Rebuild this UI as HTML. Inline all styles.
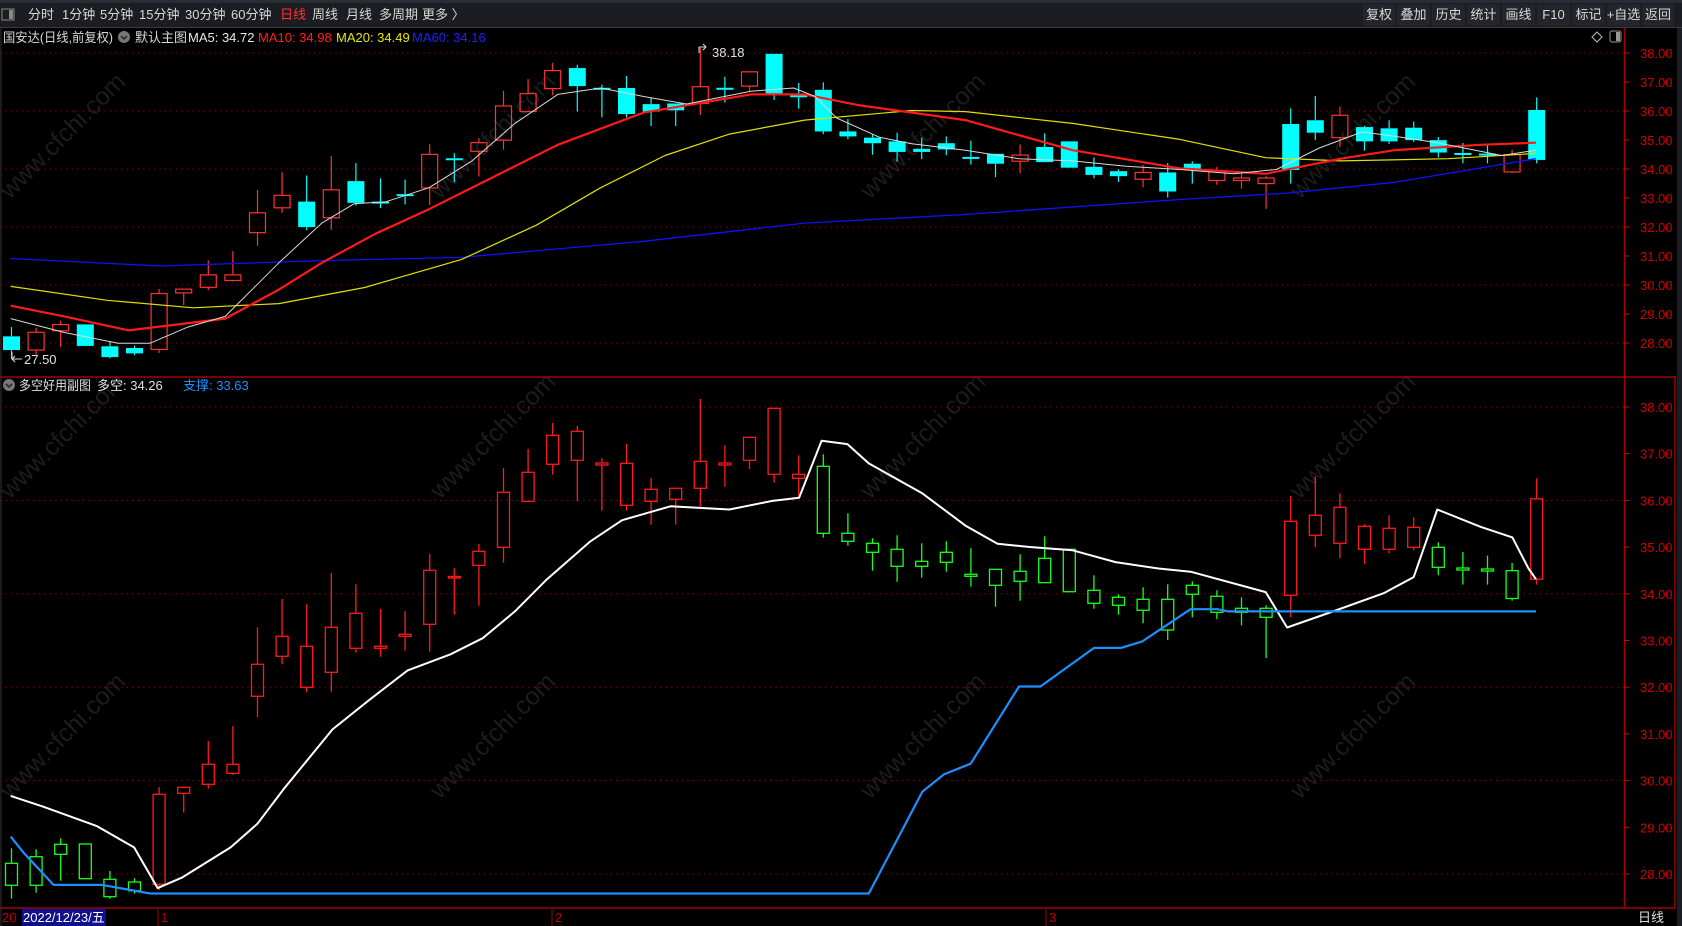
<!DOCTYPE html>
<html><head><meta charset="utf-8">
<style>
html,body{margin:0;padding:0;background:#000;width:1682px;height:926px;overflow:hidden;font-family:"Liberation Sans","Noto Sans CJK SC",sans-serif;}
svg{display:block;overflow:hidden;position:absolute;left:0;top:0}
</style></head>
<body>
<svg id="s" width="1682" height="926" viewBox="0 0 1682 926" xmlns="http://www.w3.org/2000/svg" font-family="Liberation Sans, Noto Sans CJK SC, sans-serif">
<rect x="0" y="0" width="1682" height="926" fill="#000"/>
<g id="wm" font-size="25" fill="#1c1c1c"></g>
<rect x="0" y="0" width="1682" height="27" fill="#1c1d22"/>
<rect x="0" y="0" width="1682" height="3" fill="#2a2c33"/>
<line x1="0" y1="27.5" x2="1682" y2="27.5" stroke="#3a3b40"/>
<g font-size="13" fill="#d8d8d8">
<rect x="2" y="9" width="12" height="11" fill="none" stroke="#888" stroke-width="1"/><rect x="9" y="10" width="4" height="9" fill="#888"/>
<text x="28" y="19">分时</text><text x="62" y="19">1分钟</text><text x="100" y="19">5分钟</text><text x="139" y="19">15分钟</text><text x="185" y="19">30分钟</text><text x="231" y="19">60分钟</text>
<text x="280" y="19" fill="#ff3030">日线</text><text x="312" y="19">周线</text><text x="346" y="19">月线</text><text x="379" y="19">多周期</text><text x="422" y="19">更多 〉</text>
</g>
<g id="btns" font-size="13" fill="#d8d8d8"></g>
<g font-size="13">
<text x="3" y="42" fill="#d8d8d8" textLength="110" lengthAdjust="spacingAndGlyphs">国安达(日线,前复权)</text>
<circle cx="124" cy="37" r="6" fill="#777"/><path d="M121 36 L124 39 L127 36" stroke="#222" stroke-width="1.5" fill="none"/>
<text x="135" y="42" fill="#d8d8d8">默认主图</text>
<text x="188" y="42" fill="#e8e8e8">MA5: 34.72</text>
<text x="258" y="42" fill="#ff2020">MA10: 34.98</text>
<text x="336" y="42" fill="#e8e800">MA20: 34.49</text>
<text x="412" y="42" fill="#2020ff">MA60: 34.16</text>
</g>
<path d="M1597 32 L1602 37 L1597 42 L1592 37 Z" fill="none" stroke="#bbb"/>
<rect x="1610" y="31" width="11" height="11" rx="2" fill="none" stroke="#999"/><rect x="1616" y="32" width="4" height="9" fill="#999"/>
<g id="grid"></g>
<g id="chart"></g>
<line x1="1624.5" y1="28" x2="1624.5" y2="908" stroke="#a00000" stroke-width="1.5"/>
<line x1="0" y1="377" x2="1676" y2="377" stroke="#a00000" stroke-width="1.5"/>
<line x1="0" y1="908" x2="1676" y2="908" stroke="#a00000" stroke-width="1.5"/>
<line x1="1675" y1="377" x2="1675" y2="908" stroke="#a00000" stroke-width="1.5"/>
<rect x="1677" y="28" width="5" height="898" fill="#1c1d22"/>
<line x1="1" y1="28" x2="1" y2="926" stroke="#333"/>
<g id="axis" font-size="13" fill="#d00000"></g>
<g font-size="13">
<text x="2" y="922" fill="#c00000">20</text>
<rect x="22" y="909" width="84" height="17" fill="#10108a"/>
<text x="23" y="922" fill="#fff">2022/12/23/五</text>
<line x1="158" y1="909" x2="158" y2="926" stroke="#a00000"/><text x="161" y="922" fill="#c00000">1</text>
<line x1="552" y1="909" x2="552" y2="926" stroke="#a00000"/><text x="555" y="922" fill="#c00000">2</text>
<line x1="1046" y1="909" x2="1046" y2="926" stroke="#a00000"/><text x="1049" y="922" fill="#c00000">3</text>
<text x="1638" y="922" fill="#e0e0e0">日线</text>
</g>
<g font-size="13">
<circle cx="9" cy="385" r="6" fill="#777"/><path d="M6 384 L9 387 L12 384" stroke="#222" stroke-width="1.5" fill="none"/>
<text x="19" y="390" fill="#e0e0e0" textLength="72" lengthAdjust="spacingAndGlyphs">多空好用副图</text>
<text x="97" y="390" fill="#e0e0e0">多空: 34.26</text>
<text x="183" y="390" fill="#1e90ff">支撑: 33.63</text>
</g>
</svg>
<script>
const NS="http://www.w3.org/2000/svg";
function el(p,t,a,txt){const e=document.createElementNS(NS,t);for(const k in a)e.setAttribute(k,a[k]);if(txt!==undefined)e.textContent=txt;p.appendChild(e);return e;}
const B=document.getElementById('btns');
const sep=[1362,1396,1431,1466,1501,1536,1571,1606,1641,1675];
const lab=['复权','叠加','历史','统计','画线','F10','标记','+自选','返回'];
for(let i=0;i<9;i++){el(B,'rect',{x:sep[i]+1,y:4,width:sep[i+1]-sep[i]-2,height:22,fill:'#23252b'});
 const w=sep[i+1]-sep[i];el(B,'text',{x:sep[i]+w/2,y:19,'text-anchor':'middle'},lab[i]);}
const G=document.getElementById('grid');
const yU=p=>53+(38-p)*29, yLp=p=>407+(38-p)*46.7;
for(let p=38;p>=28;p-=2){el(G,'line',{x1:0,y1:yU(p),x2:1624,y2:yU(p),stroke:'#8a0000','stroke-dasharray':'1.5 4'});
 el(G,'line',{x1:0,y1:yLp(p),x2:1624,y2:yLp(p),stroke:'#8a0000','stroke-dasharray':'1.5 4'});}
const A=document.getElementById('axis');
for(let p=38;p>=28;p--){el(A,'text',{x:1640,y:yU(p)+5},p.toFixed(2));el(A,'line',{x1:1624,y1:yU(p),x2:1629,y2:yU(p),stroke:'#d00000'});
 el(A,'text',{x:1640,y:yLp(p)+5},p.toFixed(2));el(A,'line',{x1:1624,y1:yLp(p),x2:1629,y2:yLp(p),stroke:'#d00000'});}
const W=document.getElementById('wm');
for(let r=0;r<3;r++)for(let c=0;c<4;c++){const x=10+c*430, y=200+r*300;
 el(W,'text',{x:x,y:y,transform:`rotate(-45 ${x} ${y})`},'www.cfchi.com');}
const L=[[863.3,885.3,848.3,898.7],[856.7,885.3,849.3,892.7],[844.3,854.3,838.3,880.7],[844,878.7,844,879],[879.3,896.7,871,898.7],[882,890.7,878.3,893.7],
[794.3,884.3,787,890],[787.3,793.3,787.3,812.7],[764.3,784.3,741,788.7],[764.3,773.3,726,775],[664.3,696.3,627.3,717.3],[636.3,656.3,599,664.3],[646.3,687.3,604.3,692.3],
[627.3,672.3,573,691.7],[613.3,648.3,584.3,652.7],[646.3,648.3,609,656.7],[634.3,636.3,611,650.7],[570.3,624.3,554,651.7],[576.5,577.5,568.3,614.7],[551.3,565.3,544,605.7],
[492.3,547.3,468,562.7],[472.3,501.3,449,501.3],[435.3,464.3,423,474.7],[431.3,460.3,426,501.3],[463,465,458,510.7],[463.3,505.3,444,510.7],[489.3,501.3,478,524.7],
[488.3,499.3,488.3,524.7],[461.3,488.3,399,506.7],[463,465,445.3,486.7],[437.3,460.3,436.3,469],[408.3,474.3,408.3,482.7],[474.3,478.3,455.3,496.7],
[466.3,533.3,454.3,537.7],[533.3,541.3,513.3,545.7],[543.3,552.3,538.3,570.7],[549.3,566.3,535.3,581.7],[561.3,566.3,543.3,577.7],[552.3,562.3,541.3,571.7],[574.3,576.3,548.3,586.7],
[569.3,585.3,569.3,606.7],[571.3,581.3,554.3,600.7],[558.3,582.7,536.3,582.7],[549.3,591.7,549.3,592],[590.3,603.3,575.3,608.7],[597.3,605.3,594.3,614.7],[599.3,610.3,587.3,623.3],
[599.3,630,584.3,640],[585.3,594.3,581.3,617.3],[596.3,612.3,590.3,619.3],[608.3,612.3,597.3,625.3],[608.3,617.3,605.3,658],
[521.3,595.3,496,617.3],[515.3,535.3,476.3,547.3],[507.3,543.3,493.3,558.3],[526.3,549.3,524.3,564.3],[528.3,549.3,515.3,553.3],[527.3,547.3,517.3,550.3],
[547.3,567.3,542.3,575.3],[568,570,552,584.6],[569,571,555.6,584.6],[570.6,598.5,563,600.7],[498.8,579.2,478.4,584.6]];
const lowC='gggggg'+'r'.repeat(27)+'g'.repeat(19)+'rrrrrr'+'ggggr';
const upC='crrcccrrrrrrcrcccrcrrrrcccccrcrccccccccccrccccrccrrrccrccccccr';
const X=i=>11.5+24.6*i;
const yu=y=>53+(y-407)*0.621;
const C=document.getElementById('chart');
L.forEach((c,i)=>{
 const x=X(i);
 const lc=lowC[i]==='r'?'#ff1a1a':'#1aff1a';
 el(C,'line',{x1:x,y1:c[2],x2:x,y2:c[0],stroke:lc,'stroke-width':1.3});
 el(C,'line',{x1:x,y1:c[1],x2:x,y2:c[3],stroke:lc,'stroke-width':1.3});
 el(C,'rect',{x:x-6,y:c[0],width:12,height:Math.max(1.5,c[1]-c[0]),fill:'none',stroke:lc,'stroke-width':1.3});
 const u=upC[i]==='r';const uc=u?'#ff3232':'#00ffff';
 const bt=yu(c[0]),bb=yu(c[1]),wt=yu(c[2]),wb=yu(c[3]);
 el(C,'line',{x1:x,y1:wt,x2:x,y2:bt,stroke:uc,'stroke-width':1.2});
 el(C,'line',{x1:x,y1:bb,x2:x,y2:wb,stroke:uc,'stroke-width':1.2});
 if(u) el(C,'rect',{x:x-8,y:bt,width:16,height:Math.max(1.5,bb-bt),fill:'none',stroke:uc,'stroke-width':1.2});
 else el(C,'rect',{x:x-8.5,y:bt,width:17,height:Math.max(2,bb-bt),fill:uc});
});
const k=1/0.9323;
function poly(pts,col,w){el(C,'polyline',{points:pts.map(p=>(p[0]*k).toFixed(1)+','+(p[1]*k).toFixed(1)).join(' '),fill:'none',stroke:col,'stroke-width':w,'stroke-linejoin':'round'});}
poly([[10,241],[150,248],[300,243],[430,240],[600,225],[750,208],[900,200],[1100,186],[1200,180],[1300,170],[1432,148]],'#1010ff',1.3);
poly([[10,267],[100,280],[180,287],[260,283],[340,268],[430,242],[500,210],[560,175],[620,145],[680,125],[750,112],[850,103],[900,104],[1000,115],[1100,130],[1180,147],[1250,150],[1350,148],[1432,143]],'#e0e000',1.2);
poly([[10,285],[60,295],[120,308],[210,297],[260,270],[300,245],[350,218],[400,195],[460,165],[520,135],[600,105],[700,88],[750,88],[800,98],[900,112],[1000,140],[1100,157],[1180,162],[1250,148],[1300,140],[1380,135],[1432,133]],'#ff1a1a',2.2);
poly([[10,297],[60,310],[110,320],[140,320],[175,305],[210,295],[260,245],[300,208],[330,190],[360,188],[400,175],[440,150],[480,115],[520,88],[560,82],[600,90],[640,97],[700,85],[740,82],[760,90],[780,110],[820,128],[850,134],[900,140],[950,148],[1000,150],[1050,155],[1100,158],[1150,162],[1190,158],[1230,138],[1270,123],[1300,127],[1340,133],[1400,145],[1432,140]],'#d8d8d8',1);
poly([[10,742],[40,752],[90,770],[125,790],[147,828],[170,818],[215,790],[240,768],[265,735],[310,680],[345,652],[380,625],[420,610],[450,595],[480,570],[510,540],[550,505],[580,485],[625,472],[680,475],[720,467],[745,464],[766,411],[790,414],[810,432],[860,460],[900,490],[930,507],[960,510],[1000,513],[1040,524],[1080,530],[1110,533],[1180,552],[1200,585],[1240,571],[1290,553],[1318,538],[1340,475],[1380,491],[1410,501],[1425,530],[1432,540]],'#ffffff',2);
poly([[10,780],[22,795],[50,825],[95,825],[140,833],[810,833],[860,738],[880,722],[905,712],[950,640],[970,640],[1020,604],[1045,604],[1065,598],[1110,568],[1135,568],[1145,570],[1432,570]],'#1e8fff',2.2);
el(C,'path',{d:'M699 53 L699 47 L706 47 M703 44 L706 47 L703 50',stroke:'#ddd',fill:'none','stroke-width':1});
el(C,'text',{x:712,y:57,'font-size':13,fill:'#e0e0e0'},'38.18');
el(C,'path',{d:'M12 352 L12 359 L22 359 M15 356 L12 359 L15 362',stroke:'#ddd',fill:'none','stroke-width':1});
el(C,'text',{x:24,y:364,'font-size':13,fill:'#e0e0e0'},'27.50');
</script>
</body></html>
